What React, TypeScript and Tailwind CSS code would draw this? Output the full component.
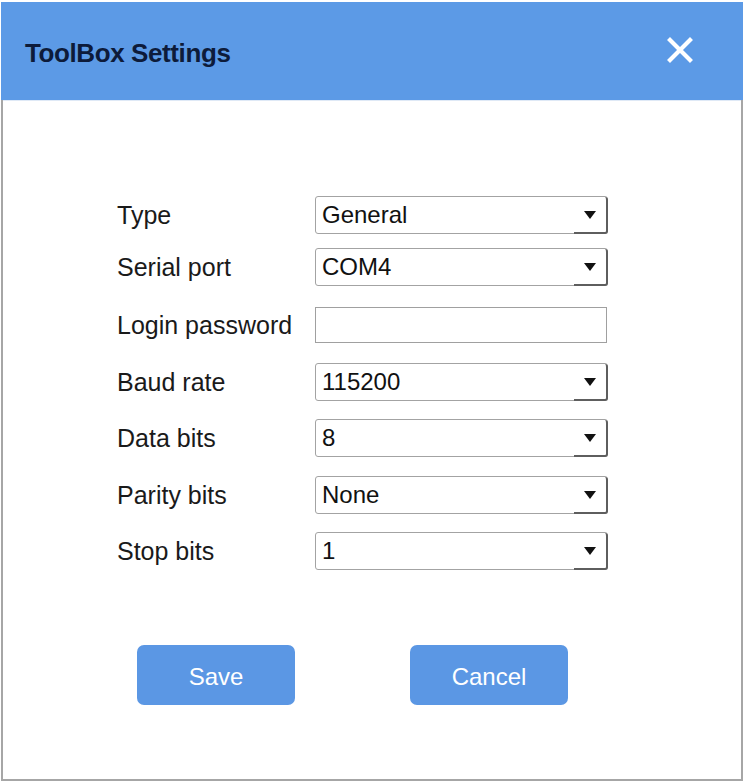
import React from "react";

const font = { fontFamily: '"Liberation Sans", Arial, sans-serif' };

function Select({ value }: { value: string }) {
  return (
    <div className="flex h-[38px] w-[293px] items-stretch rounded-[3px] border border-[#a3a3a3] bg-white">
      <div className="flex flex-1 items-center pl-[6px] text-[24px] leading-none text-[#111]">{value}</div>
      <div className="-mb-px -mr-px flex w-[34px] items-center justify-center rounded-br-[3px] rounded-tr-[3px] border-b-2 border-r-2 border-[#5e5e5e]">
        <svg width="12" height="8" viewBox="0 0 12 8" className="mt-[1px]">
          <polygon points="0,0 12,0 6,8" fill="#111" />
        </svg>
      </div>
    </div>
  );
}

function Row({ label, children, mt }: { label: string; children: React.ReactNode; mt: string }) {
  return (
    <div className={`flex items-center ${mt}`}>
      <div className="w-[198px] text-[25px] leading-none text-[#1a1a1a]">{label}</div>
      {children}
    </div>
  );
}

export default function App() {
  return (
    <div className="h-[783px] w-[745px] bg-white pt-[2px] pl-[1px]" style={font}>
      <div className="flex h-[779px] w-[742px] flex-col border-b-2 border-l-2 border-r-2 border-[#a6a6a6]">
        <div className="-ml-[2px] -mr-[2px] flex h-[98px] items-center justify-between bg-[#5c9ae6] pl-[24px] pr-[50px]">
          <div className="mt-[4px] text-[26px] font-bold tracking-[-0.4px] text-[#0d1b3a]">ToolBox Settings</div>
          <svg width="26" height="26" viewBox="0 0 26 26" className="mt-[-2px]">
            <path d="M3 3 L23 23 M23 3 L3 23" stroke="#fff" strokeWidth="4.2" strokeLinecap="square" />
          </svg>
        </div>
        <div className="h-px bg-[#dfe9f6]" />
        <div className="flex flex-col pl-[114px] pt-[95px]">
          <Row label="Type" mt="mt-0">
            <Select value="General" />
          </Row>
          <Row label="Serial port" mt="mt-[14px]">
            <Select value="COM4" />
          </Row>
          <Row label="Login password" mt="mt-[21px]">
            <div className="h-[36px] w-[292px] border border-[#a0a0a0] bg-white" />
          </Row>
          <Row label="Baud rate" mt="mt-[20px]">
            <Select value="115200" />
          </Row>
          <Row label="Data bits" mt="mt-[18px]">
            <Select value="8" />
          </Row>
          <Row label="Parity bits" mt="mt-[19px]">
            <Select value="None" />
          </Row>
          <Row label="Stop bits" mt="mt-[18px]">
            <Select value="1" />
          </Row>
          <div className="ml-[20px] mt-[75px] flex gap-[115px]">
            <button className="h-[60px] w-[158px] rounded-[7px] bg-[#5b97e4] pt-[3px] text-[24px] text-white">Save</button>
            <button className="h-[60px] w-[158px] rounded-[7px] bg-[#5b97e4] pt-[3px] text-[24px] text-white">Cancel</button>
          </div>
        </div>
      </div>
    </div>
  );
}
